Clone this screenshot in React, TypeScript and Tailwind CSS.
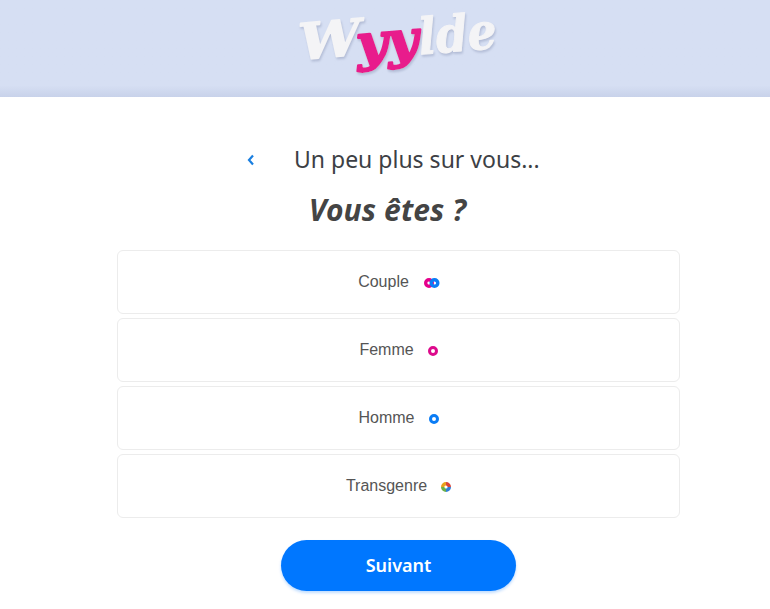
const rows = [
  { label: "Couple", icon: "couple" },
  { label: "Femme", icon: "femme" },
  { label: "Homme", icon: "homme" },
  { label: "Transgenre", icon: "trans" },
];

function Ring({ color }: { color: string }) {
  return <span className={`block w-[10px] h-[10px] rounded-full border-[3.5px] translate-y-px ${color}`} />;
}

function GenderIcon({ kind }: { kind: string }) {
  if (kind === "couple") {
    return (
      <svg width="16" height="10" viewBox="0 0 16 10" className="block translate-x-px translate-y-px">
        <circle cx="5" cy="5" r="3.3" fill="none" stroke="#e5008c" strokeWidth="3.4" />
        <circle cx="10.5" cy="5" r="3.3" fill="none" stroke="#0a7cf5" strokeWidth="3.4" />
      </svg>
    );
  }
  if (kind === "femme") return <Ring color="border-[#dd0a8c]" />;
  if (kind === "homme") return <Ring color="border-[#0a7cf5]" />;
  return (
    <svg width="10" height="10" viewBox="0 0 10 10" className="block translate-y-px">
      <g fill="none" strokeWidth="3.4">
        <path d="M1.7 5A3.3 3.3 0 0 1 5 1.7" stroke="#e9a21c" />
        <path d="M5 1.7A3.3 3.3 0 0 1 8.3 5" stroke="#d9453a" />
        <path d="M8.3 5A3.3 3.3 0 0 1 5 8.3" stroke="#2f7fd8" />
        <path d="M5 8.3A3.3 3.3 0 0 1 1.7 5" stroke="#6bb04a" />
      </g>
    </svg>
  );
}

function Logo() {
  return (
    <svg width="230" height="90" viewBox="0 0 230 90" className="block" aria-label="Wyylde">
      <defs>
        <filter id="s" x="-10%" y="-10%" width="120%" height="130%">
          <feDropShadow dx="1" dy="2" stdDeviation="1.2" floodColor="#aab4cf" floodOpacity="0.8" />
        </filter>
      </defs>
      <g filter="url(#s)" fontFamily="'DejaVu Serif', serif" fontWeight="700" fontStyle="italic" strokeLinejoin="round">
        <text transform="rotate(-5 45 40)" x="14" y="57" fontSize="50" fill="#f4f4f6" stroke="#f4f4f6" strokeWidth="1.5" textLength="62" lengthAdjust="spacingAndGlyphs">W</text>
        <text transform="rotate(-5 105 40)" x="71" y="58" fontSize="50" fill="#e81e8c" stroke="#e81e8c" strokeWidth="2.5" textLength="62" lengthAdjust="spacingAndGlyphs">yy</text>
        <text transform="rotate(-5 175 40)" x="134" y="51" fontSize="50" fill="#f4f4f6" stroke="#f4f4f6" strokeWidth="1" textLength="78" lengthAdjust="spacingAndGlyphs">lde</text>
      </g>
    </svg>
  );
}

export default function App() {
  return (
    <div className="w-[770px] h-[609px] overflow-hidden bg-white font-['Liberation_Sans',sans-serif]">
      <header className="h-[97px] flex justify-center bg-gradient-to-b from-[#d6dff3] from-88% to-[#c8d2ea]">
        <div className="ml-[30px] h-[90px]">
          <Logo />
        </div>
      </header>

      <main className="ml-[117px] w-[563px]">
        <div className="mt-[45px] h-[34px] flex items-center font-['Noto_Sans',sans-serif]">
          <svg width="8" height="12" viewBox="0 0 8 12" className="ml-[130px] mt-[2px]">
            <path d="M6 1.5 L2 6 L6 10.5" fill="none" stroke="#1a7fe0" strokeWidth="2.2" />
          </svg>
          <h2 className="ml-[39px] text-[23px] leading-[34px] text-[#3d3f45] whitespace-nowrap">Un peu plus sur vous...</h2>
        </div>

        <h1 className="mt-[16px] h-[36px] text-center pr-[22px] text-[30px] leading-[36px] font-bold italic text-[#444444] font-['Noto_Sans',sans-serif] tracking-[0.1px]">
          Vous êtes ?
        </h1>

        <div className="mt-[22px] flex flex-col gap-[4px]">
          {rows.map((r) => (
            <button
              key={r.label}
              className="h-[64px] w-full flex items-center justify-center gap-[14px] rounded-[6px] border border-[#ececec] bg-white text-[16px] text-[#555555]"
            >
              <span>{r.label}</span>
              <GenderIcon kind={r.icon} />
            </button>
          ))}
        </div>

        <div className="mt-[22px] flex justify-center">
          <button className="w-[235px] h-[51px] rounded-full bg-[#0077ff] text-white text-[18px] font-semibold font-['Noto_Sans',sans-serif] shadow-[0_2px_3px_rgba(0,119,255,0.25)]">
            Suivant
          </button>
        </div>
      </main>
    </div>
  );
}
